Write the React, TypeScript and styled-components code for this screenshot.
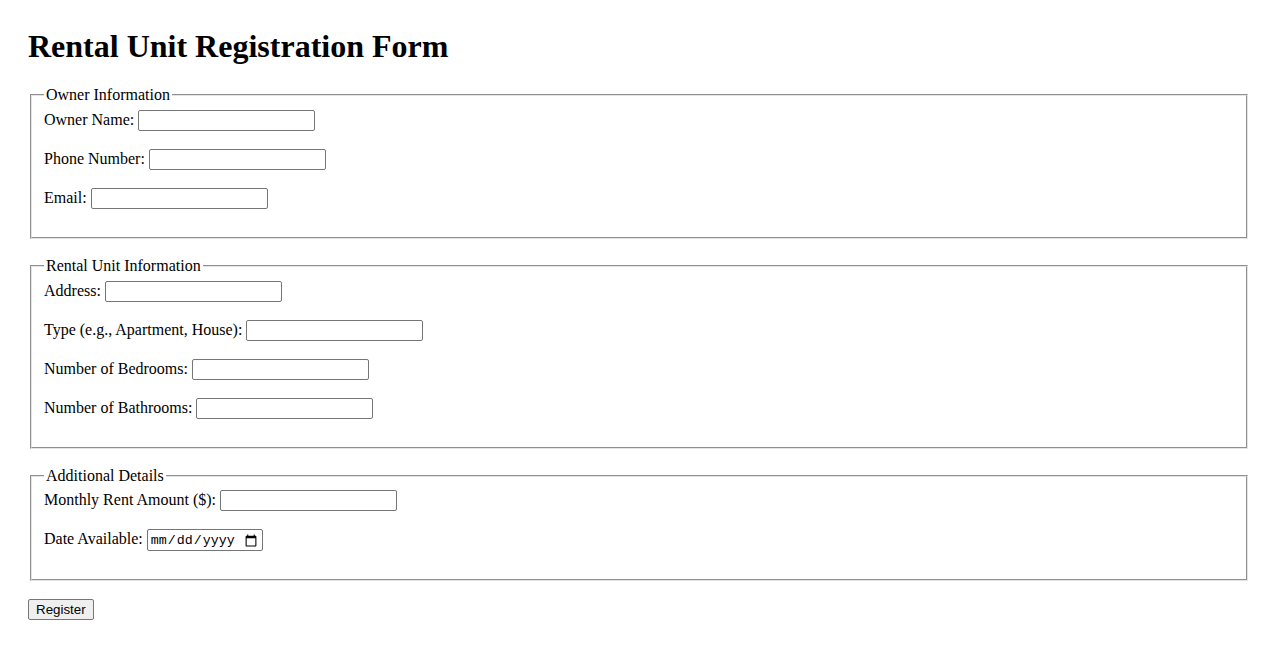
import React from 'react';
import styled, { createGlobalStyle } from 'styled-components';

const GlobalStyle = createGlobalStyle`
  body {
    margin: 0;
    background: #fff;
    color: #000;
    font-family: "Liberation Serif", "Times New Roman", serif;
    font-size: 16px;
  }
`;

const Page = styled.div`
  padding: 28px;
`;

const Title = styled.h1`
  margin: 0 0 21.44px 0;
  font-size: 32px;
  font-weight: bold;
`;

const Section = styled.fieldset`
  margin: 0 2px 18px 2px;
  padding: 5.6px 12px 10px 12px;
  border: 2px groove #e4e4e4;
  min-inline-size: min-content;
`;

const Legend = styled.legend`
  padding: 0 2px;
`;

const Row = styled.div`
  margin-bottom: 18px;
`;

const Label = styled.label`
  margin-right: 4px;
`;

const TextInput = styled.input`
  box-sizing: border-box;
  width: 177px;
  height: 21px;
  padding: 1px 2px;
  border: 1px solid #767676;
  border-radius: 2px;
  font-family: "Liberation Sans", Arial, sans-serif;
  font-size: 13.333px;
  vertical-align: baseline;
`;

const DateInput = styled(TextInput)`
  width: 116px;
  height: 22px;
  font-family: "Liberation Mono", "Courier New", monospace;
`;

const Button = styled.button`
  padding: 1px 7px;
  height: 21px;
  border: 1px solid #767676;
  border-radius: 2px;
  background: #efefef;
  color: #000;
  font-family: "Liberation Sans", Arial, sans-serif;
  font-size: 13.333px;
`;

type FieldProps = { id: string; label: string; type?: string };

const Field: React.FC<FieldProps> = ({ id, label, type = 'text' }) => (
  <Row>
    <Label htmlFor={id}>{label}</Label>
    {type === 'date' ? <DateInput id={id} type="date" /> : <TextInput id={id} type={type} />}
  </Row>
);

export default function App() {
  return (
    <Page>
      <GlobalStyle />
      <Title>Rental Unit Registration Form</Title>
      <form onSubmit={(e) => e.preventDefault()}>
        <Section>
          <Legend>Owner Information</Legend>
          <Field id="ownerName" label="Owner Name:" />
          <Field id="phone" label="Phone Number:" type="tel" />
          <Field id="email" label="Email:" type="email" />
        </Section>
        <Section>
          <Legend>Rental Unit Information</Legend>
          <Field id="address" label="Address:" />
          <Field id="type" label="Type (e.g., Apartment, House):" />
          <Field id="bedrooms" label="Number of Bedrooms:" type="number" />
          <Field id="bathrooms" label="Number of Bathrooms:" type="number" />
        </Section>
        <Section>
          <Legend>Additional Details</Legend>
          <Field id="rent" label="Monthly Rent Amount ($):" type="number" />
          <Field id="date" label="Date Available:" type="date" />
        </Section>
        <Button type="submit">Register</Button>
      </form>
    </Page>
  );
}
